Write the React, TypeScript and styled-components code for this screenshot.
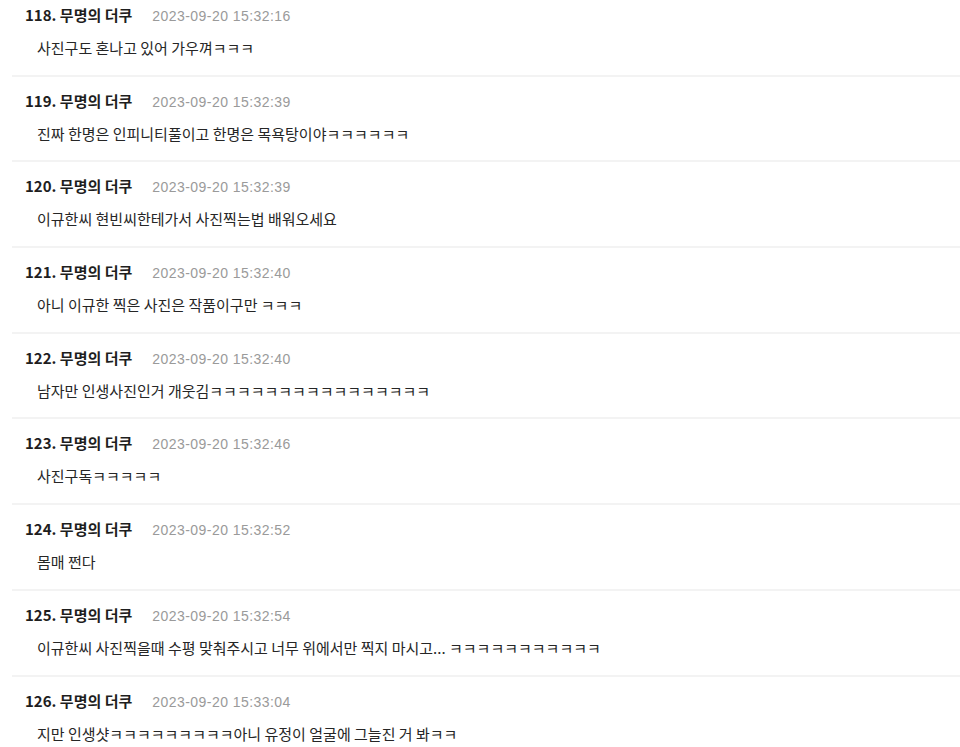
import styled, { createGlobalStyle } from "styled-components";

const GlobalStyle = createGlobalStyle`
  html, body {
    margin: 0;
    padding: 0;
    background: #fff;
    overflow: hidden;
  }
  body {
    font-family: "Noto Sans CJK KR", "Noto Sans", sans-serif;
  }
`;

interface Comment {
  no: number;
  author: string;
  date: string;
  text: string;
}

const comments: Comment[] = [
  { no: 118, author: "무명의 더쿠", date: "2023-09-20 15:32:16", text: "사진구도 혼나고 있어 가우껴ㅋㅋㅋ" },
  { no: 119, author: "무명의 더쿠", date: "2023-09-20 15:32:39", text: "진짜 한명은 인피니티풀이고 한명은 목욕탕이야ㅋㅋㅋㅋㅋㅋ" },
  { no: 120, author: "무명의 더쿠", date: "2023-09-20 15:32:39", text: "이규한씨 현빈씨한테가서 사진찍는법 배워오세요" },
  { no: 121, author: "무명의 더쿠", date: "2023-09-20 15:32:40", text: "아니 이규한 찍은 사진은 작품이구만 ㅋㅋㅋ" },
  { no: 122, author: "무명의 더쿠", date: "2023-09-20 15:32:40", text: "남자만 인생사진인거 개웃김ㅋㅋㅋㅋㅋㅋㅋㅋㅋㅋㅋㅋㅋㅋㅋㅋ" },
  { no: 123, author: "무명의 더쿠", date: "2023-09-20 15:32:46", text: "사진구독ㅋㅋㅋㅋㅋ" },
  { no: 124, author: "무명의 더쿠", date: "2023-09-20 15:32:52", text: "몸매 쩐다" },
  { no: 125, author: "무명의 더쿠", date: "2023-09-20 15:32:54", text: "이규한씨 사진찍을때 수평 맞춰주시고 너무 위에서만 찍지 마시고... ㅋㅋㅋㅋㅋㅋㅋㅋㅋㅋㅋ" },
  { no: 126, author: "무명의 더쿠", date: "2023-09-20 15:33:04", text: "지만 인생샷ㅋㅋㅋㅋㅋㅋㅋㅋㅋ아니 유정이 얼굴에 그늘진 거 봐ㅋㅋ" },
];

const List = styled.ul`
  list-style: none;
  margin: -9px 0 0 12px;
  padding: 0;
`;

const Row = styled.li`
  height: 85.7px;
  box-sizing: border-box;
  padding: 14px 0 0 13px;
  border-bottom: 2px solid #f3f3f3;
`;

const Header = styled.div`
  display: flex;
  align-items: baseline;
  height: 20px;
  line-height: 20px;
`;

const Author = styled.span`
  font-size: 15px;
  font-weight: 700;
  color: #1e1e1e;
`;

const DateText = styled.span`
  margin-left: 20px;
  font-family: "Liberation Sans", "Noto Sans CJK KR", sans-serif;
  font-size: 14px;
  color: #9a9a9a;
  letter-spacing: 0.45px;
`;

const Body = styled.p`
  margin: 13px 0 0 12px;
  font-size: 15px;
  line-height: 20px;
  color: #262626;
`;

export default function App() {
  return (
    <>
      <GlobalStyle />
      <List>
        {comments.map((c) => (
          <Row key={c.no}>
            <Header>
              <Author>
                {c.no}. {c.author}
              </Author>
              <DateText>{c.date}</DateText>
            </Header>
            <Body>{c.text}</Body>
          </Row>
        ))}
      </List>
    </>
  );
}
